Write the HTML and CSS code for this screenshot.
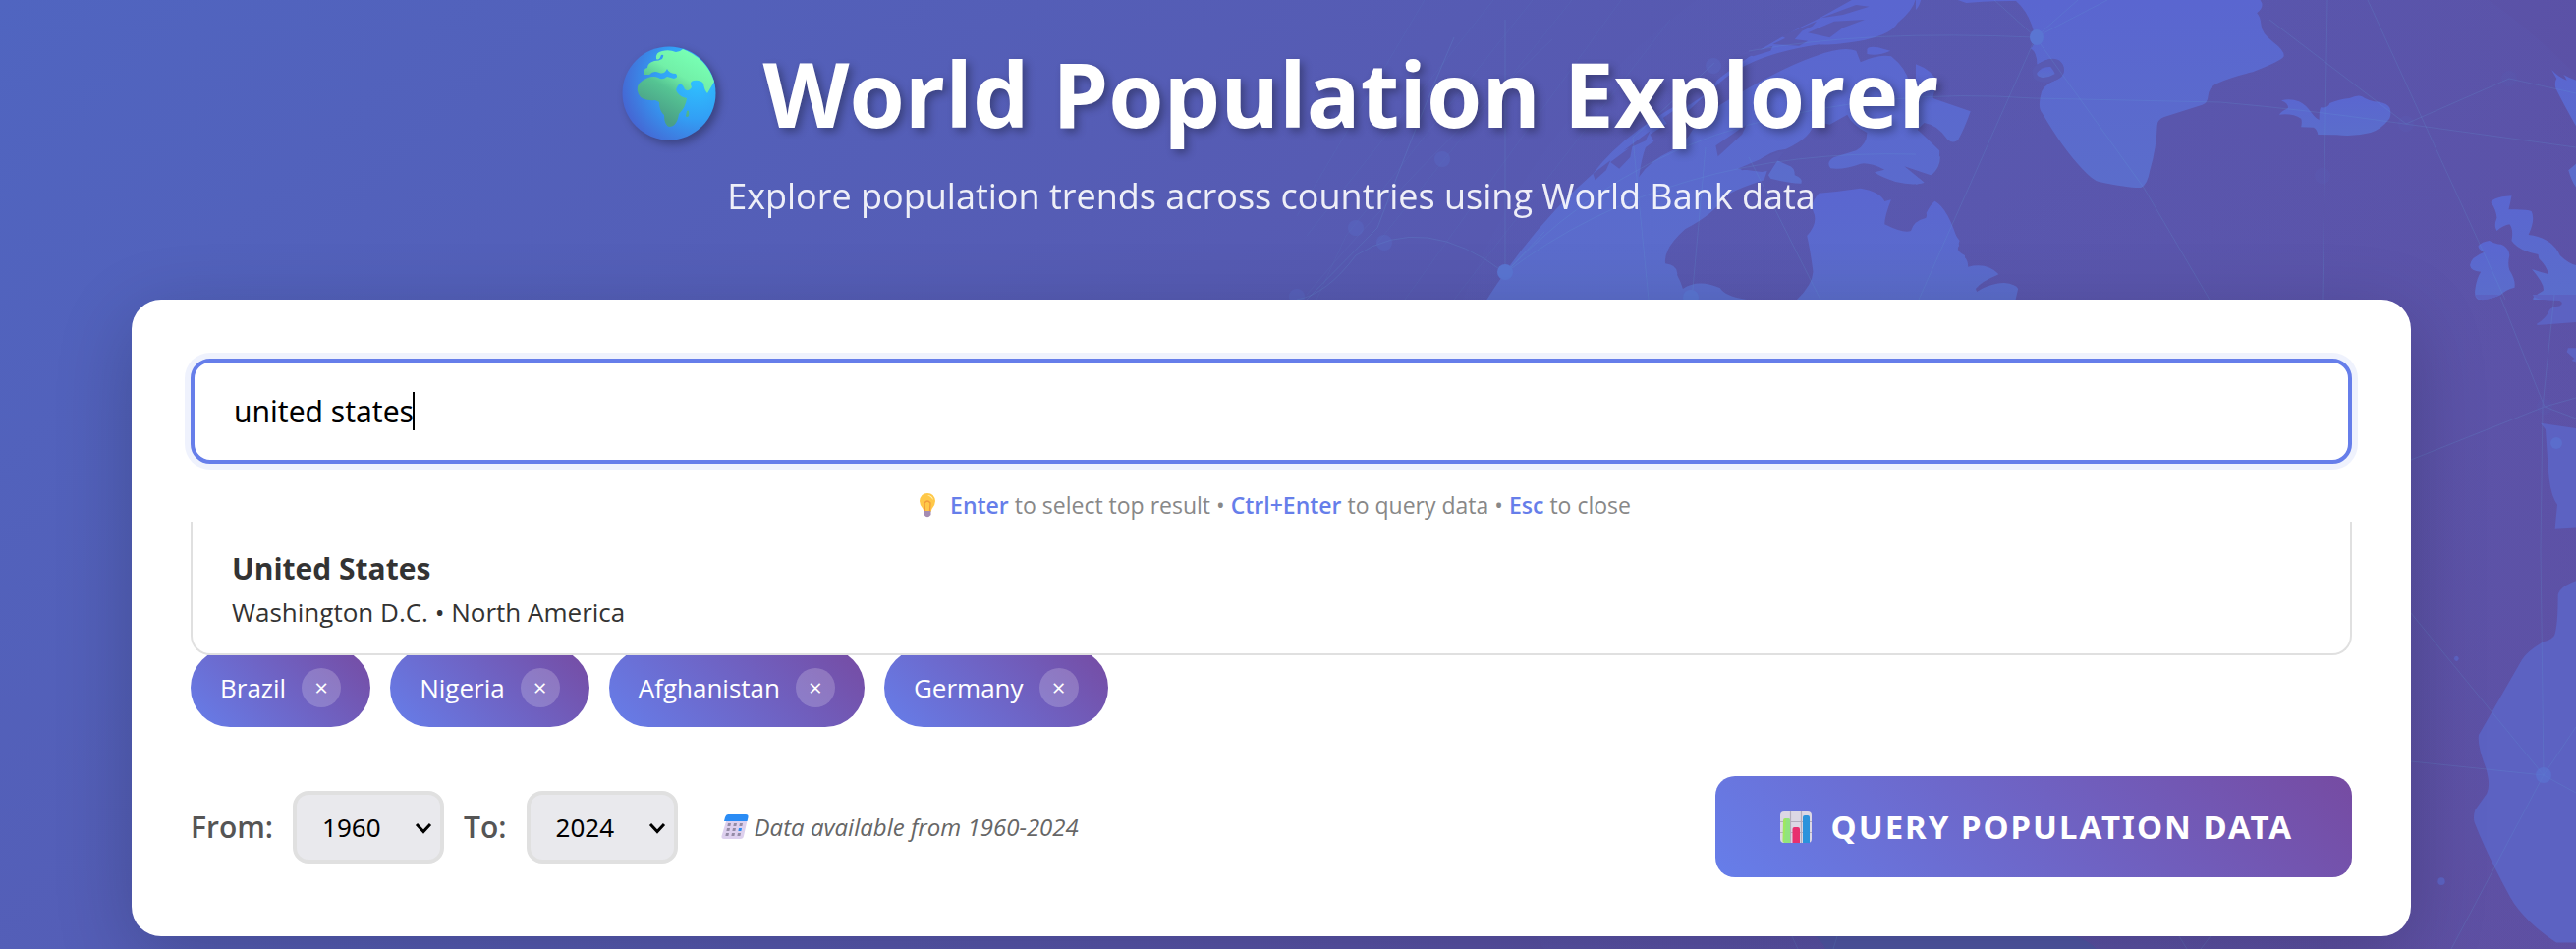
FILE: index.html
```html
<!DOCTYPE html>
<html lang="en">
<head>
<meta charset="utf-8">
<title>World Population Explorer</title>
<link rel="stylesheet" href="styles.css">
</head>
<body>
<svg class="backdrop" viewBox="0 0 2622 966" preserveAspectRatio="xMaxYMin slice" aria-hidden="true">
  <defs>
    <linearGradient id="land" x1="0" y1="0" x2="0" y2="1">
      <stop offset="0" stop-color="#5a66d0"/><stop offset="1" stop-color="#5b6dcb"/>
    </linearGradient>
    <radialGradient id="ocean"><stop offset="0" stop-color="#5a60bb" stop-opacity=".3"/><stop offset="1" stop-color="#5a60bb" stop-opacity=".1"/></radialGradient>
  </defs>
  <circle cx="2130" cy="560" r="690" fill="url(#ocean)"/>
  <g transform="translate(1950 0) scale(.4286 .3333)" class="land">
    <path d="M100 0L120 9Q180 2 238 3Q262 30 275 75Q290 130 273 148Q288 160 288 197Q318 172 335 184Q352 192 352 215Q352 236 330 246Q298 262 296 295Q290 330 300 345Q350 455 395 515Q420 550 435 555Q510 575 535 573Q550 565 556 520Q572 450 573 385Q573 365 590 357L680 320Q693 315 694 295Q696 265 715 255Q750 235 800 220Q870 185 874 172Q876 155 850 130Q820 100 820 75Q818 50 810 40Q825 25 822 10L818 0Z"/>
    <path class="sea" d="M276 215Q280 200 300 190Q325 172 340 184Q352 195 352 215Q350 238 325 248Q300 258 280 240Z"/>
    <path d="M288 222Q300 202 320 204Q330 220 330 226Q315 238 300 237Q285 232 288 222Z"/>
    <path d="M868 307Q890 300 910 310Q925 318 940 345Q950 362 958 366Q958 335 962 328Q980 330 983 315Q1010 302 1030 300Q1050 288 1060 295Q1075 310 1100 311Q1120 315 1126 330Q1130 350 1125 362Q1105 395 1080 405Q1040 418 1000 412L955 411Q953 395 945 389L915 388Q918 370 915 362Q895 345 863 350Q868 340 884 330Q885 315 868 307Z"/>
    <path d="M1366 618Q1370 602 1415 598Q1412 620 1408 640Q1450 638 1462 645Q1472 670 1455 717Q1510 725 1530 780Q1550 805 1568 810V915H1467Q1460 910 1490 888Q1495 870 1463 822Q1480 830 1502 837Q1500 815 1480 790L1478 777Q1430 765 1415 735Q1420 700 1410 685Q1395 688 1380 705Q1372 690 1380 665Q1378 640 1366 618Z"/>
    <path d="M1336 750Q1345 738 1362 735Q1375 745 1390 746Q1408 755 1410 780Q1405 805 1410 825Q1425 855 1422 878Q1400 885 1390 900Q1360 918 1335 914Q1325 905 1329 880Q1332 850 1342 830Q1318 828 1316 810Q1318 785 1350 770Q1335 762 1336 750Z"/>
    <path d="M1510 213Q1525 235 1546 245Q1542 232 1538 228Q1555 240 1568 245V385Q1535 310 1520 270Q1516 250 1522 240ZM1568 500L1550 520Q1558 555 1568 572Z"/>
    <path d="M0 680Q30 685 25 650Q35 625 45 614Q60 630 78 680Q92 715 104 735Q100 755 92 768Q125 780 124 815Q170 800 197 838Q155 860 142 882L145 891Q175 865 210 864Q238 868 243 882L237 915H0Z"/>
    <path d="M0 196Q40 215 50 250L40 300L130 340Q115 395 100 428Q87 440 75 425Q50 380 20 375L0 400V425Q50 460 58 480Q58 510 38 534Q20 520 0 515V430Z"/>
    <path d="M0 0H12Q8 20 0 30ZM0 540Q10 545 20 557L0 563Z"/>
  </g>
  <g transform="translate(1300 20) scale(.4464 .3333)" class="land">
    <path d="M478 855Q590 620 720 470Q800 330 970 220Q1090 85 1230 0L1310 -60H1455Q1450 -30 1415 10Q1400 45 1340 62Q1260 80 1235 76Q1090 105 1020 180L960 250L880 350L840 390Q830 425 825 480Q850 430 900 400Q930 380 950 330L1010 260Q1150 145 1230 110Q1290 80 1320 95L1330 130Q1370 105 1400 112Q1435 150 1440 190Q1480 210 1500 245Q1450 290 1455 330Q1480 360 1510 400Q1512 450 1490 475L1430 448Q1460 480 1475 498Q1450 508 1410 495Q1375 480 1362 466L1385 458Q1350 435 1330 440Q1290 460 1262 454Q1250 435 1270 420L1320 400Q1345 380 1345 345Q1310 320 1300 290L1260 320L1225 310Q1220 360 1160 395Q1120 400 1090 440Q1050 455 1060 460L1120 450L1110 490Q1050 515 1020 540Q1000 590 930 640Q880 700 885 745Q915 750 912 780Q920 800 925 822Q960 790 1010 820Q1020 845 1070 855Z"/>
    <path d="M1120 475L1140 430L1165 445Q1180 450 1180 475Q1200 485 1195 500Q1170 500 1125 485ZM1345 90Q1350 80 1370 85L1398 95Q1370 112 1345 105Z"/>
    <path d="M1185 855Q1220 810 1222 770Q1215 700 1208 660Q1235 620 1222 585Q1215 560 1235 530Q1280 525 1330 515Q1375 525 1385 555L1400 550Q1385 600 1385 625Q1430 655 1445 645Q1450 615 1480 605Q1480 580 1500 555Q1530 575 1555 690Q1545 705 1568 720V855Z"/>
    <path class="sea" d="M1000 385L1070 320L1060 350L1005 418ZM850 350L920 290L905 330L860 375ZM760 435L810 385L805 420L780 455ZM925 245L1005 180L990 215L940 260ZM1050 455L1140 405L1155 405L1125 460L1105 465ZM880 300L950 235L930 275L890 320ZM720 470L760 430L750 460L725 490ZM790 400L850 340L840 370Z"/>
    <path class="sea" d="M1020 125L1110 75L1100 90L1060 110ZM1130 75L1200 30L1180 60L1210 65L1190 80ZM1210 40L1270 5L1340 0L1290 25L1260 55ZM1070 105L1130 80L1125 95L1085 112ZM1150 50L1230 5L1220 20L1160 58ZM1240 -5L1320 -45L1350 -40L1290 -15Z"/>
  </g>
  <g transform="translate(2422 300) scale(.3333 .4247)" class="land right">
    <path d="M468 0Q470 14 550 14Q565 20 550 27Q525 28 518 38Q510 55 480 70L482 73L600 66V0ZM576 128H600V161L587 158L595 153L572 137Z"/>
    <path d="M492 308L600 320V557L536 560L543 503Q520 480 515 415L507 323Z"/>
    <path d="M600 686Q550 700 545 720Q545 790 535 815Q530 825 500 832Q450 855 435 875L303 1055Q298 1080 325 1135Q340 1175 328 1195L292 1235Q285 1250 290 1265Q330 1345 400 1445Q440 1500 540 1553H600Z"/>
    <ellipse cx="235" cy="872" rx="7" ry="6"/><ellipse cx="189" cy="1406" rx="11" ry="9"/><path d="M292 0Q300 14 320 12Q350 8 366 0Z"/>
  </g>
  <g class="land low"><path d="M1848 953Q1856 960 1858 966H2134Q2125 957 2112 953Z"/></g>
  <g class="net">
    <path d="M1532 278Q1640 165 1780 127T2070 100L2260 104Q2350 112 2433 124L2622 150M1532 278Q1700 150 1950 157M1532 278Q1450 215 1380 260Q1350 300 1320 305M1532 278L1572 236M1480 38Q1440 130 1402 232L1330 305M1532 20V278M1745 64L1662 140L1678 305M1736 150L1722 305M1780 160L1853 305M2072 38L2115 0M2072 38L2145 0M2072 38L2030 0M2072 38L2182 191L2249 305M2072 38L1953 305M1780 52Q1900 30 2070 38M2369 0L2364 305M2410 0L2550 305M2310 20L2449 126L2554 80L2622 95"/>
    <path d="M2589 789L2454 624M2589 789L2454 775M2589 789L2495 966M2589 789L2622 740M2589 789L2622 807M2589 789L2586 560L2588 414L2600 300M2590 414L2454 468M2590 414L2545 302M2590 414L2622 405M2590 414L2622 426"/>
    <path d="M1824 953L1830 966M1870 953L1866 966M2218 953L2226 966M2250 953L2240 966"/>
  </g>
  <g class="far">
    <path d="M1520 0L1330 240M1560 0L1370 240L1340 305M1600 0L1400 250M1650 0L1430 305M1450 0L1320 220M1700 20L1480 305M1580 40Q1430 180 1330 300"/>
  </g>
  <g class="nodes">
    <ellipse cx="2073" cy="38" rx="7" ry="8"/><circle cx="1532" cy="277" r="8"/><circle cx="1721" cy="303" r="8"/>
    <g opacity=".25"><circle cx="1468" cy="162" r="8"/><circle cx="1380" cy="232" r="8"/><circle cx="1409" cy="247" r="8"/><circle cx="1320" cy="302" r="8"/><circle cx="1744" cy="67" r="8"/></g>
    <g opacity=".08"><circle cx="2364" cy="179" r="8"/><circle cx="2449" cy="126" r="8"/><circle cx="2554" cy="80" r="8"/><circle cx="2590" cy="414" r="8"/></g>
    <circle cx="2589" cy="789" r="8" opacity=".6"/><circle cx="2602" cy="451" r="6" opacity=".6"/>
  </g>
</svg>

<main class="page">
  <header class="hero">
    <h1>
      <svg class="globe" viewBox="0 0 96 96" aria-hidden="true">
        <defs>
          <radialGradient id="sea" cx=".8" cy=".35" r=".85"><stop offset="0" stop-color="#2fc3ff"/><stop offset=".5" stop-color="#329ff5"/><stop offset="1" stop-color="#4664d2"/></radialGradient>
          <linearGradient id="soil" x1=".8" y1=".1" x2=".35" y2=".9"><stop offset="0" stop-color="#78ffb4"/><stop offset=".35" stop-color="#72f0a8"/><stop offset=".6" stop-color="#55c493"/><stop offset="1" stop-color="#4a9f87"/></linearGradient>
        </defs>
        <circle cx="48" cy="48" r="47.500" fill="url(#sea)"/>
        <path fill="url(#soil)" d="M62 3Q86 12 94 36L87 48Q84 45 83 38Q80 34 73 35Q68 36 71 42Q68 47 64 44Q62 38 58 39Q53 44 57 48Q60 52 66 53Q65 62 58 69Q56 82 48 82Q43 80 43 70Q38 66 38 57L34 55Q20 56 17 49Q13 40 21 35Q30 29 37 32Q41 35 46 31L53 33Q58 32 55 28Q48 28 46 23Q43 29 38 27Q32 24 28 29H23Q21 23 26 22Q26 17 33 15Q38 15 41 13Q44 8 40 9Q38 15 35 13Q34 6 41 5Q48 3 55 6Q59 6 62 3ZM66 66Q69 64 68 71Q66 73 65 71Z"/>
      </svg>
      <span>World Population Explorer</span>
    </h1>
    <p class="tagline">Explore population trends across countries using World Bank data</p>
  </header>

  <section class="card">
    <div class="search">
      <div class="field">
        <input class="search-input" id="country" type="text" value="united states" aria-label="Search for a country" autocomplete="off" spellcheck="false">
        <span class="caret"></span>
      </div>
      <p class="hint">
        <svg class="bulb" viewBox="0 0 16 25" aria-hidden="true"><path d="M8 0Q15 0 16 8Q16 12 12.500 16L11.500 19H4.500L3.500 16Q0 12 0 8Q1 0 8 0Z" fill="#ffc848"/><path d="M8 2Q13 2 14 7Q11 3 8 2Z" fill="#fff3b8"/><path d="M5.500 18L5 10Q8 6 11 10L10.500 18" fill="none" stroke="#f09a3a" stroke-width="1.300"/><path d="M4.500 18H11.500V22Q8 26.500 4.500 22Z" fill="#a48bb2"/></svg>
        <span><b>Enter</b> to select top result • <b>Ctrl+Enter</b> to query data • <b>Esc</b> to close</span>
      </p>
      <div class="results" role="listbox">
        <div class="result" role="option" aria-selected="true">
          <strong>United States</strong>
          <span>Washington D.C. • North America</span>
        </div>
      </div>
    </div>

    <div class="chips">
      <span class="chip">Brazil<button type="button" aria-label="Remove Brazil">×</button></span>
      <span class="chip">Nigeria<button type="button" aria-label="Remove Nigeria">×</button></span>
      <span class="chip">Afghanistan<button type="button" aria-label="Remove Afghanistan">×</button></span>
      <span class="chip">Germany<button type="button" aria-label="Remove Germany">×</button></span>
    </div>

    <div class="controls">
      <div class="years">
        <label for="from">From:</label>
        <span class="select"><select id="from"><option>1960</option></select><svg viewBox="0 0 18 12" aria-hidden="true"><path d="M2 2L9 9.500L16 2"/></svg></span>
        <label for="to">To:</label>
        <span class="select"><select id="to"><option>2024</option></select><svg viewBox="0 0 18 12" aria-hidden="true"><path d="M2 2L9 9.500L16 2"/></svg></span>
        <p class="range">
          <svg viewBox="0 0 28 25" aria-hidden="true"><path d="M6 4H27L23 22Q22.500 25 19.500 25H3Q0 25 .5 22Z" fill="#ddd0ee"/><path d="M7 0H25Q28 0 27.500 3L26.500 7H3L4 3Q5 0 7 0Z" fill="#2a8cf5"/><g fill="#948ba6"><path d="M7 9h3l-.6 3h-3zM13 9h3l-.6 3h-3zM19 9h3l-.6 3h-3zM6 14h3l-.6 3h-3zM12 14h3l-.6 3h-3zM5 19h3l-.6 3h-3zM11 19h3l-.6 3h-3zM17 19h3l-.6 3h-3z"/></g><path d="M18 14h3l-.6 3h-3z" fill="#2a8cf5"/></svg>
          <em>Data available from 1960-2024</em>
        </p>
      </div>
      <button class="query" type="button">
        <svg viewBox="0 0 32 32" aria-hidden="true"><rect width="32" height="32" rx="4" fill="#dcd7e4"/><path d="M0 10.500H32M0 21.500H32M10.500 0V32M21.500 0V32" stroke="#b3acbd" stroke-width="1.200"/><path d="M3 9Q3 7 5 7H8Q10 7 10 9V32H4Q2 31 2.500 29Z" fill="#9fe860"/><path d="M6 7H8Q10 7 10 9V32H4Z" fill="#8be38a" opacity=".7"/><path d="M12.500 18Q12.500 16 14.500 16H18Q20 16 20 18V32H12.500Z" fill="#e8306f"/><path d="M23 6Q23 4 25 4H28Q30 4 30 6V32H23Z" fill="#2b93dc"/></svg>
        <span>QUERY POPULATION DATA</span>
      </button>
    </div>
  </section>
</main>
</body>
</html>
```
FILE: styles.css
```css
* { box-sizing: border-box; margin: 0; padding: 0; }

body {
  position: relative;
  min-height: 100vh;
  overflow: hidden;
  font-family: "Segoe UI", "Open Sans", "Noto Sans", sans-serif;
  color: #333;
  background: linear-gradient(135deg, #5065c0 0%, #565bb3 42%, #5b51a6 75%, #5f4d9f 100%);
}

.backdrop { position: absolute; inset: 0; width: 100%; height: 100%; }
.land { fill: url(#land); }
.land .sea { fill: #595ab2; }
.land.right { fill: #5c62c2; }
.land.low { fill: #5158a8; }
.net, .far { fill: none; stroke: #62a0d8; stroke-width: 1; opacity: .2; }
.far { opacity: .08; }
.nodes { fill: #5a75d2; }

.page {
  position: relative;
  width: calc(100% - 188px);
  margin: 0 auto;
  padding: 30px 74px 0 40px;
}

.hero { text-align: center; color: #fff; margin-bottom: 79px; }
h1 {
  display: flex;
  justify-content: center;
  align-items: center;
  gap: 48px;
  padding-left: 18px;
  font-size: 91px;
  line-height: 130px;
  font-weight: 700;
  text-shadow: 4px 4px 8px rgba(0, 0, 0, .3);
}
.globe { width: 96px; height: 96px; filter: drop-shadow(4px 4px 4px rgba(0, 0, 0, .3)); }
.tagline { margin-top: 14px; font-size: 36px; line-height: 52px; opacity: .9; }

.card {
  padding: 60px;
  border-radius: 30px;
  background: #fff;
  box-shadow: 0 20px 80px rgba(0, 0, 0, .2);
}

.search { position: relative; margin-bottom: 129px; }
.field { position: relative; }
.search-input {
  display: block;
  width: 100%;
  height: 107px;
  padding: 0 40px;
  border: 4px solid #667eea;
  border-radius: 20px;
  box-shadow: 0 0 0 6px rgba(102, 126, 234, .1);
  outline: none;
  font-family: Tahoma, "Noto Sans", sans-serif;
  font-size: 30px;
  color: #000;
  background: #fff;
}
.caret { position: absolute; left: 226px; top: 34px; width: 2px; height: 39px; background: #000; }

.hint {
  display: flex;
  justify-content: center;
  align-items: center;
  gap: 15px;
  padding: 26px 0 0 8px;
  font-size: 23px;
  line-height: 33px;
  color: #888;
}
.hint b { font-weight: 600; color: #667eea; }
.bulb { width: 16px; height: 25px; }

.results {
  position: absolute;
  top: 100%;
  left: 0;
  right: 0;
  border: 2px solid #e0e0e0;
  border-top: 0;
  border-radius: 0 0 20px 20px;
  background: #fff;
}
.result { display: flex; flex-direction: column; padding: 26px 40px 20px; }
.result strong { font-size: 30px; line-height: 44px; }
.result span { font-size: 26px; line-height: 44px; }

.chips { display: flex; flex-wrap: wrap; gap: 20px; margin-bottom: 50px; }
.chip {
  display: flex;
  align-items: center;
  gap: 16px;
  height: 80px;
  padding: 0 30px;
  border-radius: 40px;
  color: #fff;
  font-size: 26px;
  line-height: 38px;
  background: linear-gradient(45deg, #667eea, #764ba2);
}
.chip button {
  width: 40px;
  height: 40px;
  border: 0;
  border-radius: 50%;
  color: #fff;
  font: 24px/40px "Open Sans", sans-serif;
  background: rgba(255, 255, 255, .2);
}

.controls { display: flex; justify-content: space-between; align-items: center; }
.years { display: flex; align-items: center; gap: 20px; }
.years label { font-size: 30px; line-height: 42px; font-weight: 600; color: #555; }
.select { position: relative; }
.select select {
  display: block;
  appearance: none;
  width: 154px;
  height: 74px;
  padding: 0 26px;
  border: 4px solid #e0e0e0;
  border-radius: 16px;
  color: #000;
  font-family: Tahoma, "Noto Sans", sans-serif;
  font-size: 26px;
  background: #e9e9ed;
}
.select svg {
  position: absolute;
  right: 12px;
  top: 32px;
  width: 18px;
  height: 12px;
  fill: none;
  stroke: #000;
  stroke-width: 3;
  pointer-events: none;
}
.range { display: flex; align-items: center; gap: 6px; margin-left: 24px; font-size: 24px; line-height: 33px; color: #666; }
.range svg { width: 28px; height: 25px; }

.query {
  display: flex;
  align-items: center;
  justify-content: center;
  gap: 20px;
  height: 103px;
  padding: 0 60px 0 66px;
  border: 0;
  border-radius: 20px;
  color: #fff;
  font-family: "Noto Sans", sans-serif;
  font-size: 33px;
  font-weight: 700;
  letter-spacing: 2px;
  background: linear-gradient(45deg, #667eea, #764ba2);
}
.query svg { width: 32px; height: 32px; }
```
